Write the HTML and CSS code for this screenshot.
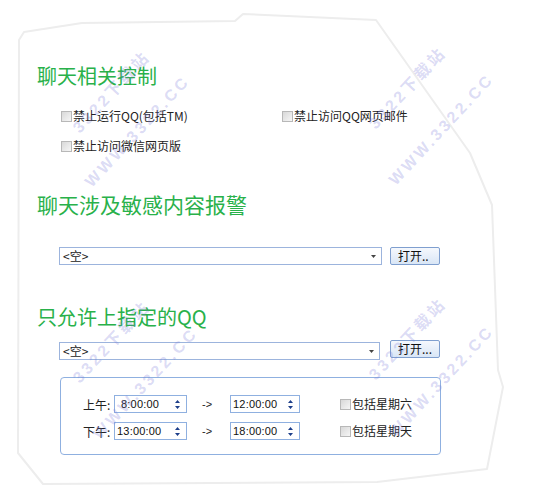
FILE: index.html
```html
<!DOCTYPE html>
<html>
<head>
<meta charset="utf-8">
<link rel="stylesheet" href="styles.css">
</head>
<body>
<div class="page">
  <svg class="frame" width="534" height="500" viewBox="0 0 534 500">
    <polygon points="24,32 82,23 235,21 243,14 376,20 470,153 492,205 498,370 503,387 487,469 377,482 43,484 18,453 19,40" fill="#fff" stroke="#ededed" stroke-width="2" stroke-linejoin="round"/>
  </svg>
  <div class="content">
    <h2 class="title">聊天相关控制</h2>
    <div class="checks">
      <label class="cb"><span class="box"></span>禁止运行QQ(包括TM)</label>
      <label class="cb"><span class="box"></span>禁止访问QQ网页邮件</label>
      <label class="cb"><span class="box"></span>禁止访问微信网页版</label>
    </div>
    <h2 class="title t2">聊天涉及敏感内容报警</h2>
    <div class="crow">
      <div class="combo"><span>&lt;空&gt;</span><svg width="5" height="3" viewBox="0 0 5 3"><path d="M0 0H5L2.5 3Z" fill="#444"/></svg></div>
      <div class="btn">打开..</div>
    </div>
    <h2 class="title t3">只允许上指定的QQ</h2>
    <div class="crow r2">
      <div class="combo"><span>&lt;空&gt;</span><svg width="5" height="3" viewBox="0 0 5 3"><path d="M0 0H5L2.5 3Z" fill="#444"/></svg></div>
      <div class="btn">打开...</div>
    </div>
    <div class="group">
      <div class="trow">
        <span class="lbl">上午:</span>
        <div class="spin"><span class="pad">8:00:00</span><svg width="5" height="9" viewBox="0 0 5 9"><path d="M2.5 0L5 3H0Z M0 6H5L2.5 9Z" fill="#1e3f8a"/></svg></div>
        <span class="arrow">-&gt;</span>
        <div class="spin s2"><span>12:00:00</span><svg width="5" height="9" viewBox="0 0 5 9"><path d="M2.5 0L5 3H0Z M0 6H5L2.5 9Z" fill="#1e3f8a"/></svg></div>
        <label class="cb gcb"><span class="box"></span>包括星期六</label>
      </div>
      <div class="trow">
        <span class="lbl">下午:</span>
        <div class="spin"><span>13:00:00</span><svg width="5" height="9" viewBox="0 0 5 9"><path d="M2.5 0L5 3H0Z M0 6H5L2.5 9Z" fill="#1e3f8a"/></svg></div>
        <span class="arrow">-&gt;</span>
        <div class="spin s2"><span>18:00:00</span><svg width="5" height="9" viewBox="0 0 5 9"><path d="M2.5 0L5 3H0Z M0 6H5L2.5 9Z" fill="#1e3f8a"/></svg></div>
        <label class="cb gcb"><span class="box"></span>包括星期天</label>
      </div>
    </div>
  </div>
  <span class="wm wa1">3322下载站</span>
  <span class="wm wa2">WWW.3322.CC</span>
  <span class="wm wb1">3322下载站</span>
  <span class="wm wb2">WWW.3322.CC</span>
  <span class="wm wc1">3322下载站</span>
  <span class="wm wc2">WWW.3322.CC</span>
  <span class="wm wd1">3322下载站</span>
  <span class="wm wd2">WWW.3322.CC</span>
</div>
</body>
</html>
```
FILE: styles.css
```css
* { box-sizing: border-box; }
body {
  margin: 0;
  background: #fff;
  font-family: "Noto Sans CJK SC", sans-serif;
  font-size: 12px;
  color: #222;
}
.page {
  position: relative;
  width: 534px;
  height: 500px;
  overflow: hidden;
}
.frame {
  position: absolute;
  left: 0;
  top: 0;
}
.content {
  position: relative;
  padding: 66px 0 0 37px;
}
.title {
  margin: 0;
  font-weight: 400;
  font-size: 20px;
  line-height: 20px;
  height: 20px;
  color: #29b14a;
  white-space: nowrap;
}
.checks {
  display: grid;
  grid-template-columns: 221px auto;
  row-gap: 16px;
  margin: 23px 0 0 24px;
}
.cb {
  display: flex;
  align-items: center;
  height: 14px;
  line-height: 14px;
  white-space: nowrap;
}
.box {
  width: 11px;
  height: 11px;
  border: 1px solid #b8b8b8;
  background: linear-gradient(135deg, #d8d8d8, #f6f6f6);
  margin-right: 1px;
  flex: none;
}
.t2 {
  margin-top: 41px;
  font-size: 21px;
  line-height: 21px;
  height: 21px;
}
.t3 {
  margin-top: 42px;
}
.crow {
  display: flex;
  align-items: flex-start;
  gap: 8px;
  margin: 32px 0 0 22px;
}
.combo {
  width: 323px;
  height: 18px;
  border: 1px solid #9cb4dd;
  background: #fff;
  display: flex;
  align-items: center;
  justify-content: space-between;
  padding: 0 5px 0 3px;
  line-height: 16px;
}
.combo svg { display: block; }
.btn {
  width: 50px;
  height: 18px;
  border: 1px solid #7f9fcf;
  border-radius: 2px;
  background: linear-gradient(#f5f8fd, #d9e6f6);
  padding-left: 7px;
  line-height: 16px;
  color: #111;
  white-space: nowrap;
}
.r2 {
  margin-top: 13px;
  gap: 10px;
}
.r2 .combo {
  margin-top: 2px;
  width: 321px;
}
.group {
  margin: 17px 0 0 23px;
  width: 381px;
  height: 78px;
  border: 1px solid #8fb0e0;
  border-radius: 4px;
  padding: 17px 0 0 22px;
  display: flex;
  flex-direction: column;
  gap: 9px;
}
.trow {
  display: flex;
  align-items: center;
  height: 18px;
}
.lbl {
  width: 31px;
  flex: none;
}
.spin {
  width: 73px;
  height: 18px;
  border: 1px solid #8fb0e0;
  background: #fff;
  display: flex;
  align-items: center;
  justify-content: space-between;
  padding: 0 6px 0 2px;
  font-family: "Liberation Sans", sans-serif;
  font-size: 11px;
  letter-spacing: 0.2px;
  color: #111;
  flex: none;
}
.spin svg { display: block; }
.spin .pad { padding-left: 4px; }
.s2 { width: 70px; }
.arrow {
  margin: 0 15px;
  font-family: "Liberation Sans", sans-serif;
  font-size: 11px;
  width: 13px;
}
.gcb {
  margin-left: 40px;
}
.wm {
  position: absolute;
  font-family: "Liberation Sans", "Noto Sans CJK SC", sans-serif;
  font-weight: 700;
  font-size: 16px;
  line-height: 16px;
  letter-spacing: 3px;
  color: rgba(120, 120, 215, 0.27);
  transform-origin: 0 100%;
  transform: rotate(-47deg);
  white-space: nowrap;
  pointer-events: none;
}
.wa1 { left: 82px; top: 120px; }
.wa2 { left: 94px; top: 174px; }
.wb1 { left: 378px; top: 116px; }
.wb2 { left: 398px; top: 172px; }
.wc1 { left: 82px; top: 370px; }
.wc2 { left: 102px; top: 426px; }
.wd1 { left: 378px; top: 367px; }
.wd2 { left: 398px; top: 424px; }
```
